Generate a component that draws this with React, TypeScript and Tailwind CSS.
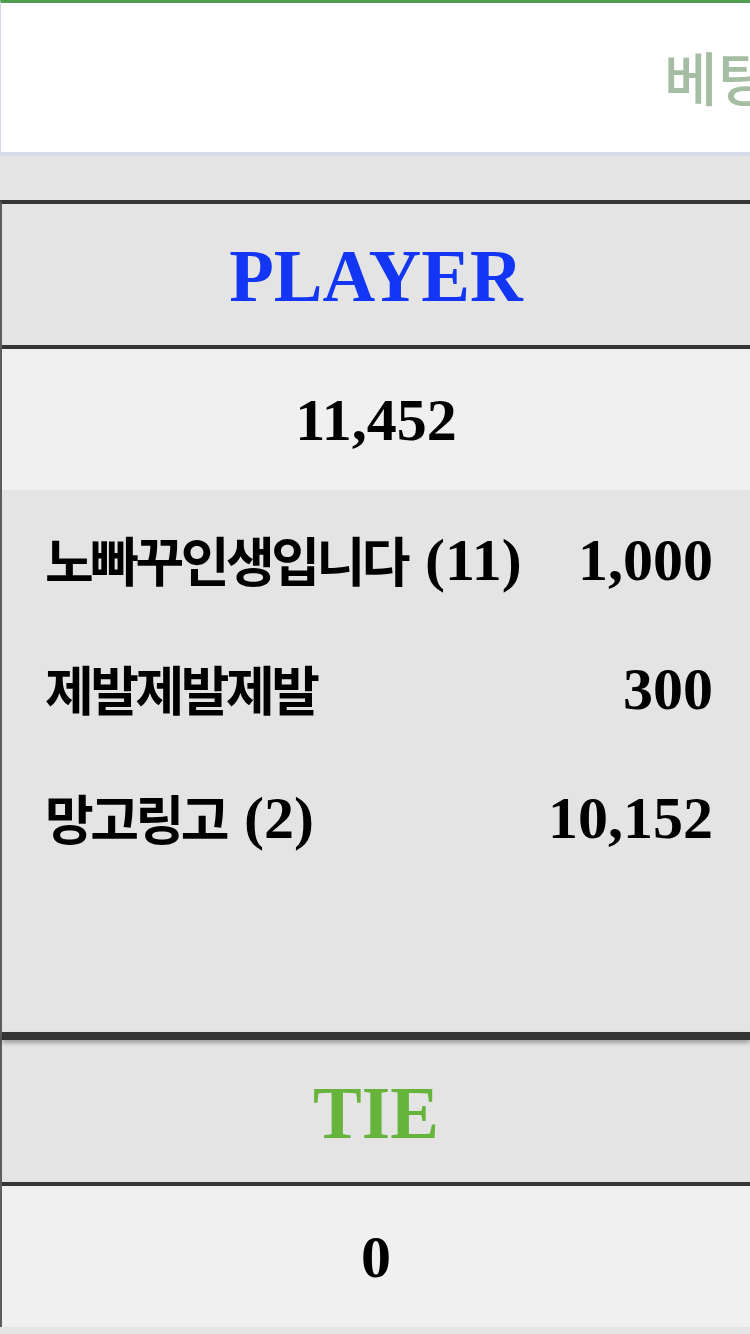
import React from 'react';

type Bet = { name: string; count?: number; amount: string };

const playerBets: Bet[] = [
  { name: '노빠꾸인생입니다', count: 11, amount: '1,000' },
  { name: '제발제발제발', amount: '300' },
  { name: '망고링고', count: 2, amount: '10,152' },
];

const serif = 'font-["Liberation_Serif","Times_New_Roman",serif]';

const BetRow: React.FC<{ bet: Bet }> = ({ bet }) => (
  <div className="h-[129px] flex items-center justify-between text-black">
    <div className="flex items-center whitespace-nowrap">
      <span className='font-["Noto_Sans_CJK_KR","Noto_Sans",sans-serif] font-bold text-[53px] tracking-[-3.5px] leading-none'>
        {bet.name}
      </span>
      {bet.count !== undefined && (
        <span className={`${serif} font-bold text-[60px] leading-none ml-[18px]`}>({bet.count})</span>
      )}
    </div>
    <span className={`${serif} font-bold text-[60px] leading-none`}>{bet.amount}</span>
  </div>
);

const SideHeader: React.FC<{ label: string; color: string; tall?: boolean }> = ({ label, color, tall }) => (
  <div
    className={`${tall ? 'h-[146px]' : 'h-[145px]'} bg-[#e4e4e4] flex items-center justify-center border-b-4 border-[#353535]`}
  >
    <span className={`${serif} font-bold text-[73px] leading-none pt-[4px] ${color}`}>{label}</span>
  </div>
);

const Total: React.FC<{ value: string }> = ({ value }) => (
  <div className="h-[141px] bg-[#f0f0f0] flex items-center justify-center">
    <span className={`${serif} font-bold text-[60px] leading-none text-black`}>{value}</span>
  </div>
);

export default function App() {
  return (
    <div className="w-[750px] min-h-[1334px] bg-[#e4e4e4] overflow-hidden">
      {/* title bar, text runs off the right edge */}
      <div className="h-[156px] bg-white border-t-[3px] border-t-[#4f9e52] border-l border-l-[#d3d9e6] border-b-4 border-b-[#d6dce8] flex items-center pl-[663px] overflow-hidden">
        <span className='whitespace-nowrap font-["Noto_Sans_CJK_KR","Noto_Sans",sans-serif] font-medium text-[58px] leading-none text-[#a5bda2] -mt-[4px]'>
          베팅 현황
        </span>
      </div>

      <div className="h-[44px]" />

      <div className="border-t-4 border-t-[#353535] border-l-2 border-l-[#5c5c5c]">
        <SideHeader label="PLAYER" color="text-[#1236f4]" />
        <Total value="11,452" />
        <div className="h-[542px] bg-[#e4e4e4] pl-[43px] pr-[37px] pt-[5px]">
          {playerBets.map((b) => (
            <BetRow key={b.name} bet={b} />
          ))}
        </div>
        <div className="relative z-10 h-[8px] bg-[#333333] shadow-[0_3px_4px_rgba(0,0,0,0.3)]" />
        <SideHeader label="TIE" color="text-[#67b43c]" tall />
        <Total value="0" />
      </div>
    </div>
  );
}
